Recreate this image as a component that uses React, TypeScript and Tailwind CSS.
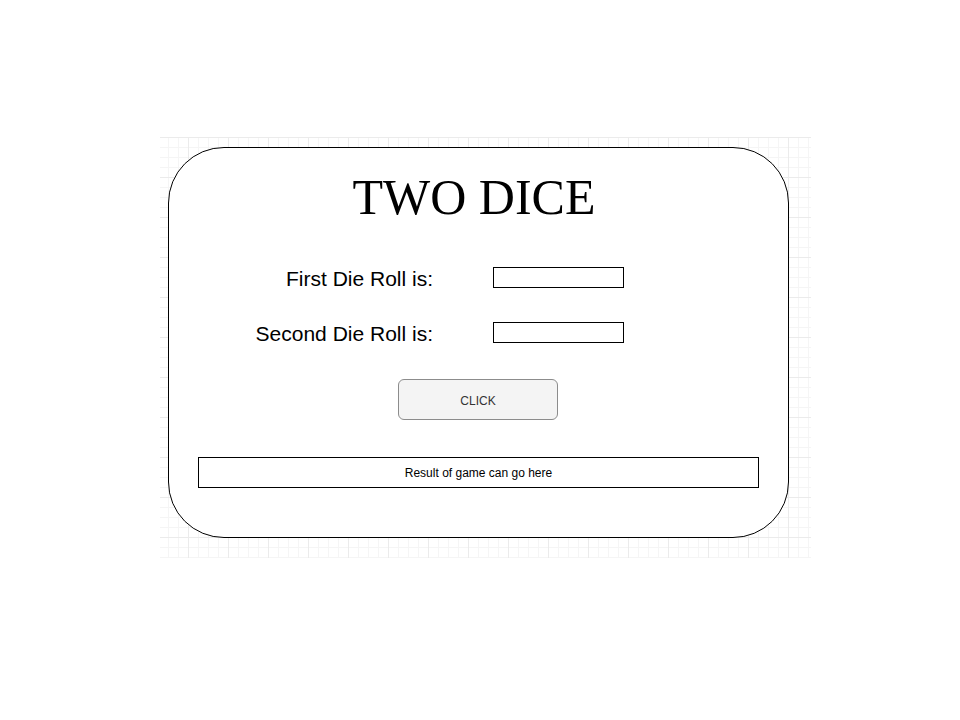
import React from "react";

export default function App() {
  return (
    <div className="w-[960px] h-[720px] bg-white pt-[137px] pl-[160px]">
      <div className="w-[651px] h-[421px] pt-[10px] pl-[8px] bg-[linear-gradient(to_right,#ebebeb_1px,transparent_1px),linear-gradient(to_bottom,#ebebeb_1px,transparent_1px),linear-gradient(to_right,#f5f5f5_1px,transparent_1px),linear-gradient(to_bottom,#f5f5f5_1px,transparent_1px)] [background-size:40px_40px,40px_40px,10px_10px,10px_10px] [background-position:28px_0,0_0,8px_0,0_0]">
        <div className="w-[621px] h-[391px] rounded-[56px] border border-black bg-white">
          <div
            className="pt-[21px] pr-[9px] text-center text-[50px] leading-[56px] text-black"
            style={{ fontFamily: '"Liberation Serif", "Times New Roman", serif' }}
          >
            TWO DICE
          </div>
          <div style={{ fontFamily: '"Liberation Sans", Arial, sans-serif' }}>
            <div className="mt-[42px] flex items-start">
              <div className="w-[264px] text-right text-[21px] leading-[24px] text-black">
                First Die Roll is:
              </div>
              <div className="ml-[60px] w-[131px] h-[21px] border border-black bg-white" />
            </div>
            <div className="mt-[31px] flex items-start">
              <div className="w-[264px] text-right text-[21px] leading-[24px] text-black">
                Second Die Roll is:
              </div>
              <div className="ml-[60px] w-[131px] h-[21px] border border-black bg-white" />
            </div>
            <div className="mt-[33px] ml-[229px] w-[160px] h-[41px] pt-[2px] rounded-[6px] border border-[#8c8c8c] bg-[#f4f4f4] flex items-center justify-center text-[12px] text-[#333333]">
              CLICK
            </div>
            <div className="mt-[37px] ml-[29px] w-[561px] h-[31px] border border-black flex items-center justify-center text-[12px] text-black">
              Result of game can go here
            </div>
          </div>
        </div>
      </div>
    </div>
  );
}
